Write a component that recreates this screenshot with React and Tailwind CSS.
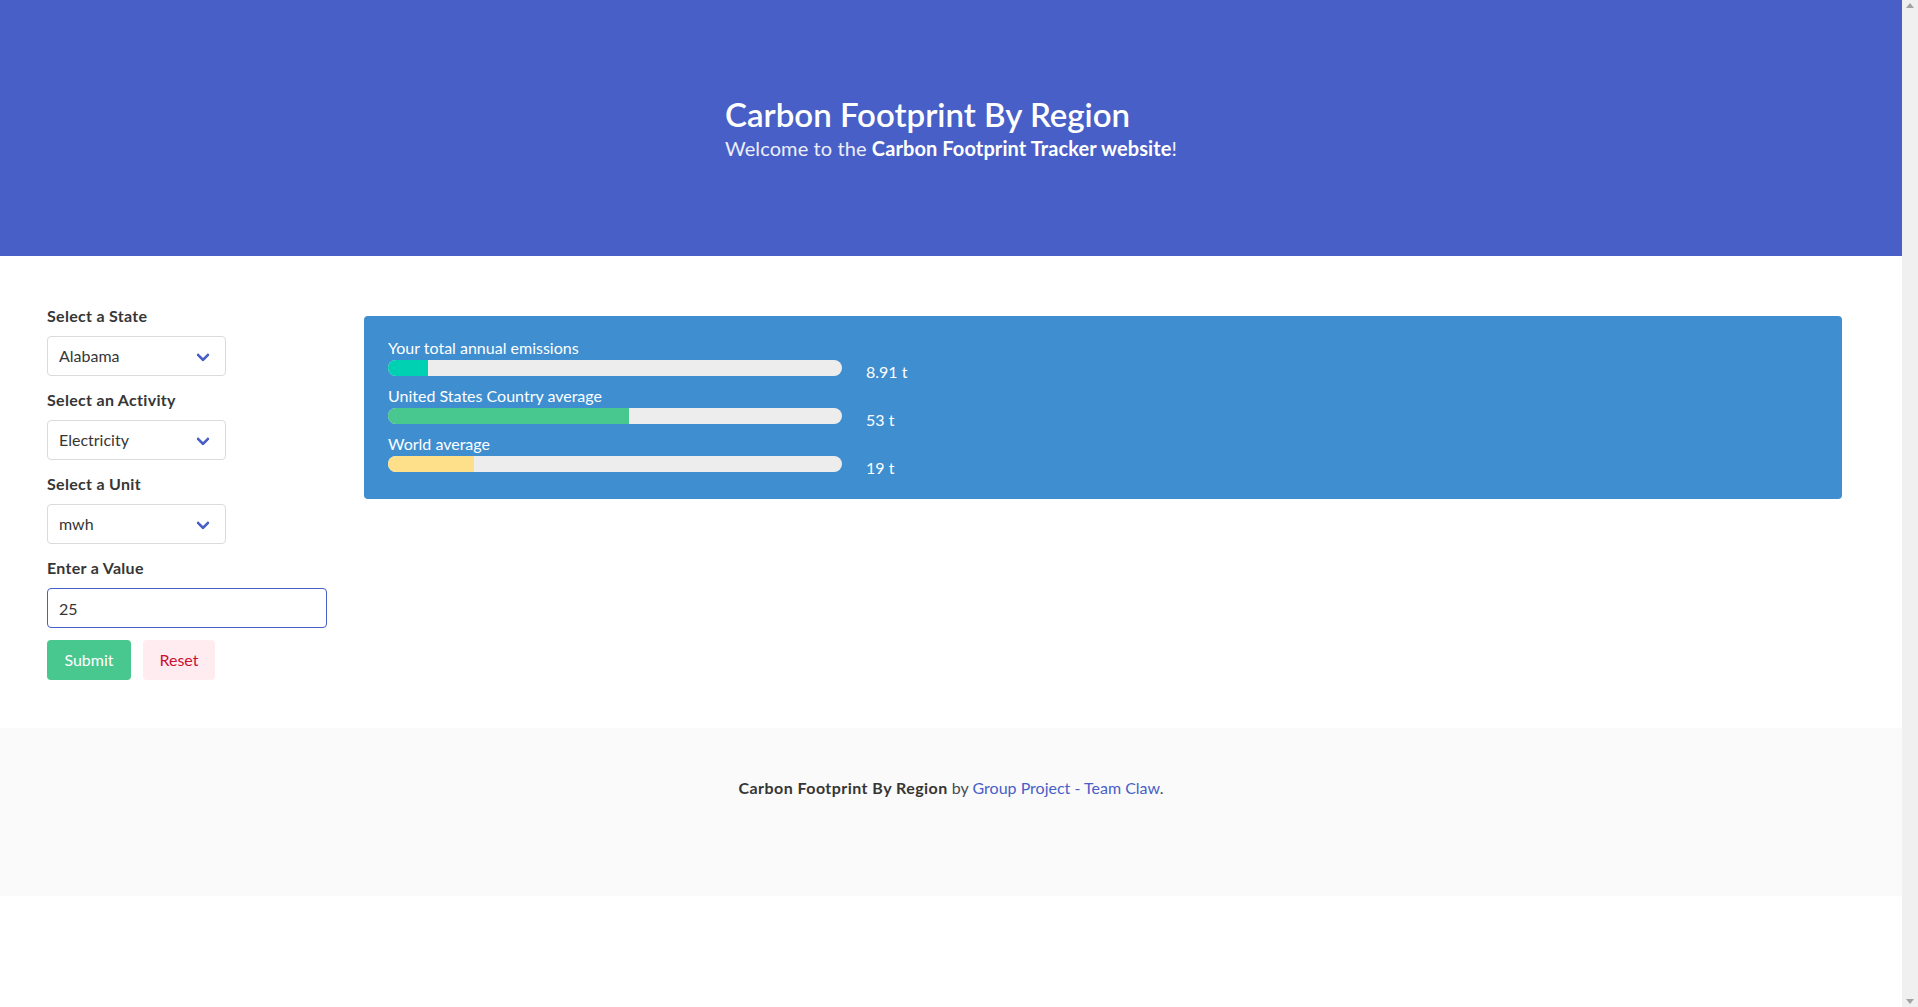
import React from 'react';

const font = { fontFamily: 'Lato, "Noto Sans", sans-serif' };

const emissions = [
  { label: 'Your total annual emissions', value: '8.91 t', pct: 8.91, color: 'bg-[#00d1b2]' },
  { label: 'United States Country average', value: '53 t', pct: 53, color: 'bg-[#48c78e]' },
  { label: 'World average', value: '19 t', pct: 19, color: 'bg-[#ffe08a]' },
];

const FieldLabel = ({ children }) => (
  <label className="block text-base leading-6 font-bold tracking-[0.3px] text-[#363636] mb-2">{children}</label>
);

const SelectField = ({ label, value }) => (
  <div className="mb-3">
    <FieldLabel>{label}</FieldLabel>
    <div className="relative w-[179px] h-10">
      <div className="h-10 w-full rounded border border-[#dbdbdb] bg-white pl-[11px] text-base leading-[38px] text-[#363636]">
        {value}
      </div>
      {/* bulma-style arrow */}
      <span className="absolute right-[18px] top-[14px] w-[10px] h-[10px] border-l-[3px] border-b-[3px] border-[#485fc7] rounded-[2px] -rotate-45"></span>
    </div>
  </div>
);

const Scrollbar = () => (
  <aside className="w-4 shrink-0 bg-[#f0f0f0] flex flex-col justify-between items-center py-[3px]">
    <svg width="8" height="5" viewBox="0 0 8 5"><path d="M4 0 L8 5 L0 5 Z" fill="#a3a3a3" /></svg>
    <svg width="8" height="5" viewBox="0 0 8 5"><path d="M0 0 L8 0 L4 5 Z" fill="#a3a3a3" /></svg>
  </aside>
);

export default function App() {
  return (
    <div className="flex h-screen overflow-hidden bg-white" style={font}>
      <div className="flex-1 min-w-0">
        {/* Hero */}
        <header className="h-64 bg-[#485fc7] flex justify-center pt-24">
          <div>
            <h1 className="text-[33px] leading-9 font-semibold text-white">Carbon Footprint By Region</h1>
            <p className="mt-1 text-xl leading-[25px] tracking-[0.1px] text-white/90">
              Welcome to the <strong className="font-bold text-white">Carbon Footprint Tracker website</strong>!
            </p>
          </div>
        </header>

        {/* Main */}
        <section className="flex pl-[47px] pr-[60px] pt-12 pb-12">
          <div className="w-[317px] shrink-0">
            <SelectField label="Select a State" value="Alabama" />
            <SelectField label="Select an Activity" value="Electricity" />
            <SelectField label="Select a Unit" value="mwh" />
            <div className="mb-3">
              <FieldLabel>Enter a Value</FieldLabel>
              <input
                readOnly
                value="25"
                className="w-[280px] h-10 rounded border border-[#485fc7] pl-[11px] text-base text-[#363636] outline-none"
              />
            </div>
            <div className="flex gap-3">
              <button className="h-10 w-[84px] rounded bg-[#48c78e] text-white text-base">Submit</button>
              <button className="h-10 w-[72px] rounded bg-[#feecf0] text-[#cc0f35] text-base">Reset</button>
            </div>
          </div>

          <div className="flex-1 mt-3">
            <div className="h-[183px] rounded bg-[#3e8ed0] pl-6 pt-5 text-white">
              {emissions.map((e) => (
                <div key={e.label} className="flex items-start h-12">
                  <div className="w-[454px]">
                    <div className="text-base leading-6">{e.label}</div>
                    <div className="h-4 w-full rounded-full bg-[#ededed] overflow-hidden">
                      <div className={`h-full ${e.color}`} style={{ width: `${e.pct}%` }}></div>
                    </div>
                  </div>
                  <div className="ml-6 pt-6 text-base leading-6">{e.value}</div>
                </div>
              ))}
            </div>
          </div>
        </section>

        {/* Footer */}
        <footer className="bg-[#fafafa] pt-12 pb-24 text-center text-base leading-6 text-[#4a4a4a]">
          <strong className="font-bold tracking-[0.45px] text-[#363636]">Carbon Footprint By Region</strong> by{' '}
          <a className="text-[#485fc7]">Group Project - Team Claw</a>.
        </footer>
      </div>
      <Scrollbar />
    </div>
  );
}
